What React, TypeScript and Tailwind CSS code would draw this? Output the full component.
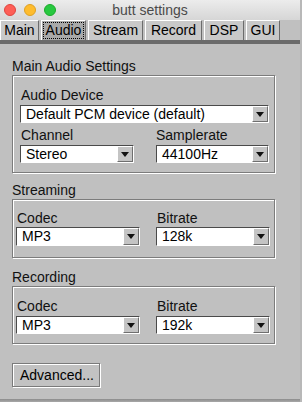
const tabs = [
  { name: "Main", w: "w-[39px]" },
  { name: "Audio", w: "w-[45px]", active: true },
  { name: "Stream", w: "w-[55px]" },
  { name: "Record", w: "w-[57px]" },
  { name: "DSP", w: "w-[40px]" },
  { name: "GUI", w: "w-[34px]" },
];

function Choice({ value, className }: { value: string; className: string }) {
  return (
    <div className={`flex border border-t-[#4a4a4a] border-l-[#4a4a4a] border-b-white border-r-white ${className}`}>
      <div className="flex-1 bg-white pl-[5px] leading-[16px] text-[14px] text-black whitespace-nowrap overflow-hidden">{value}</div>
      <div className="w-[16px] bg-[#c4c4c4] border border-t-white border-l-white border-b-[#6f6f6f] border-r-[#6f6f6f] flex items-center justify-center">
        <svg width="8" height="5" viewBox="0 0 8 5">
          <path d="M0 0H8L4 5Z" fill="#111" />
        </svg>
      </div>
    </div>
  );
}

function Group({ children, className }: { children: React.ReactNode; className: string }) {
  return (
    <div className={`w-[263px] border border-[#7c7c7c] shadow-[1px_1px_0_#fff,inset_1px_1px_0_#fff] ${className}`}>
      {children}
    </div>
  );
}

function Label({ text, className = "" }: { text: string; className?: string }) {
  return <div className={`h-[16px] leading-[16px] text-[14px] text-[#111] ${className}`}>{text}</div>;
}

export default function App() {
  return (
    <div className="w-[302px] h-[402px] bg-[#b8b8b8] font-['Liberation_Sans',Arial,sans-serif] overflow-hidden">
      <div className="w-[300px] h-[399px] bg-[#c0c0c0] flex flex-col">
        {/* title bar */}
        <div className="relative h-[20px] bg-gradient-to-b from-[#ececec] to-[#d6d6d6] flex items-center">
          <div className="flex gap-[8px] pl-[4px]">
            <span className="w-[12px] h-[12px] rounded-full bg-[#fe5f57] border border-[#e0443e]" />
            <span className="w-[12px] h-[12px] rounded-full bg-[#febc2e] border border-[#dea123]" />
            <span className="w-[12px] h-[12px] rounded-full bg-[#28c840] border border-[#1aab29]" />
          </div>
          <div className="absolute inset-0 flex items-center justify-center text-[14px] text-[#4a4a4a]">butt settings</div>
        </div>

        {/* tabs */}
        <div className="h-[20px] flex gap-[2px] bg-[#c0c0c0] items-stretch">
          {tabs.map((t) => (
            <div
              key={t.name}
              className={`${t.w} flex items-center justify-center border-l border-t border-r border-l-white border-t-white border-r-[#6c6c6c] text-[14px] text-black ${t.active ? "bg-[#a9a9a9]" : "bg-[#c9c9c9]"}`}
            >
              <span className={t.active ? "outline outline-1 outline-dotted outline-black px-[2px] leading-[15px]" : "leading-[15px]"}>
                {t.name}
              </span>
            </div>
          ))}
        </div>
        <div className="h-[4px] bg-[#6b6b6b]" />

        {/* content */}
        <div className="flex-1 pl-[12px] pt-[14px] flex flex-col">
          <Label text="Main Audio Settings" />
          <Group className="mt-[1px] pt-[11px] pb-[9px] pl-[7px]">
            <Label text="Audio Device" className="pl-[1px]" />
            <Choice value="Default PCM device (default)" className="mt-[2px] w-[249px] h-[18px]" />
            <div className="flex mt-[4px]">
              <div className="w-[136px]">
                <Label text="Channel" className="pl-[1px]" />
                <Choice value="Stereo" className="mt-[2px] w-[114px] h-[18px]" />
              </div>
              <div>
                <Label text="Samplerate" />
                <Choice value="44100Hz" className="mt-[2px] w-[113px] h-[18px]" />
              </div>
            </div>
          </Group>

          <Label text="Streaming" className="mt-[9px]" />
          <Group className="mt-[1px] pt-[10px] pb-[11px] pl-[3px]">
            <div className="flex">
              <div className="w-[140px]">
                <Label text="Codec" className="pl-[1px]" />
                <Choice value="MP3" className="mt-[1px] w-[124px] h-[19px]" />
              </div>
              <div>
                <Label text="Bitrate" className="pl-[1px]" />
                <Choice value="128k" className="mt-[1px] w-[114px] h-[19px]" />
              </div>
            </div>
          </Group>

          <Label text="Recording" className="mt-[11px]" />
          <Group className="mt-[1px] pt-[11px] pb-[9px] pl-[3px]">
            <div className="flex">
              <div className="w-[140px]">
                <Label text="Codec" className="pl-[1px]" />
                <Choice value="MP3" className="mt-[2px] w-[124px] h-[18px]" />
              </div>
              <div>
                <Label text="Bitrate" className="pl-[1px]" />
                <Choice value="192k" className="mt-[2px] w-[114px] h-[18px]" />
              </div>
            </div>
          </Group>

          <button className="mt-[19px] w-[88px] h-[24px] border border-[#7a7a7a] shadow-[1px_1px_0_#fff,inset_1px_1px_0_#fff] bg-[#c2c2c2] text-[14px] text-black leading-[16px] text-left pl-[7px]">
            Advanced...
          </button>
        </div>
      </div>
      <div className="h-[3px] w-[300px] bg-gradient-to-b from-[#8c8c8c] to-[#a8a8a8]" />
    </div>
  );
}
